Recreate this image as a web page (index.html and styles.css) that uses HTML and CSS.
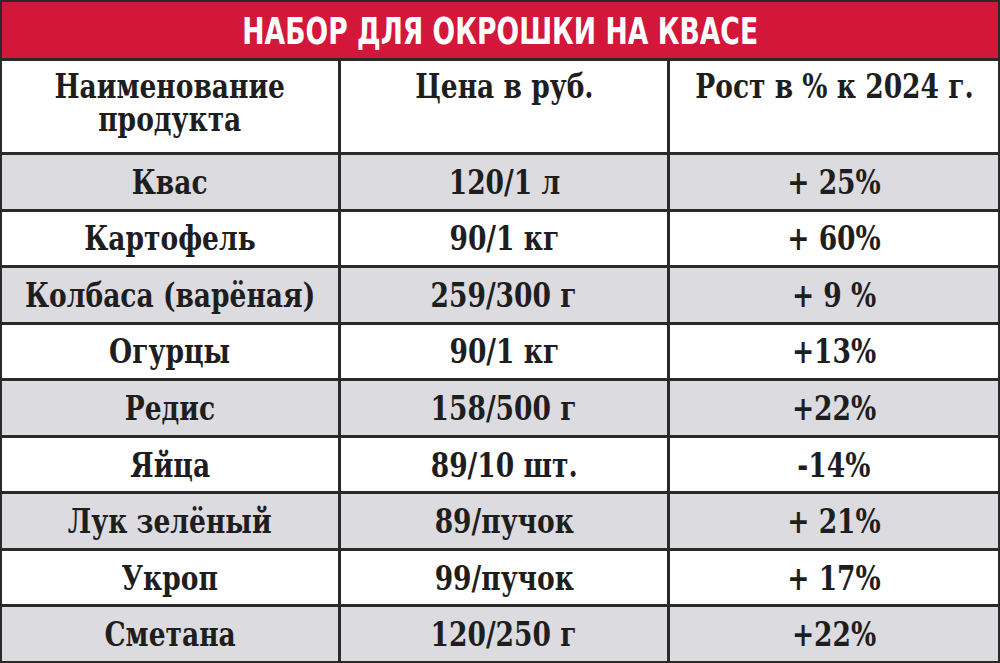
FILE: index.html
```html
<!DOCTYPE html>
<html lang="ru">
<head>
<meta charset="utf-8">
<title>Набор для окрошки на квасе</title>
<link rel="stylesheet" href="styles.css">
</head>
<body>
<div class="sheet">
  <div class="title"><span class="ttl">НАБОР ДЛЯ ОКРОШКИ НА КВАСЕ</span></div>

  <div class="cell head"><span class="txt">Наименование<br>продукта</span></div>
  <div class="cell head"><span class="txt">Цена в руб.</span></div>
  <div class="cell head"><span class="txt">Рост в % к 2024 г.</span></div>

  <div class="cell gray"><span class="txt">Квас</span></div>
  <div class="cell gray"><span class="txt">120/1 л</span></div>
  <div class="cell gray"><span class="txt">+ 25%</span></div>

  <div class="cell"><span class="txt">Картофель</span></div>
  <div class="cell"><span class="txt">90/1 кг</span></div>
  <div class="cell"><span class="txt">+ 60%</span></div>

  <div class="cell gray"><span class="txt">Колбаса (варёная)</span></div>
  <div class="cell gray"><span class="txt">259/300 г</span></div>
  <div class="cell gray"><span class="txt">+ 9 %</span></div>

  <div class="cell"><span class="txt">Огурцы</span></div>
  <div class="cell"><span class="txt">90/1 кг</span></div>
  <div class="cell"><span class="txt">+13%</span></div>

  <div class="cell gray"><span class="txt">Редис</span></div>
  <div class="cell gray"><span class="txt">158/500 г</span></div>
  <div class="cell gray"><span class="txt">+22%</span></div>

  <div class="cell"><span class="txt">Яйца</span></div>
  <div class="cell"><span class="txt">89/10 шт.</span></div>
  <div class="cell"><span class="txt">-14%</span></div>

  <div class="cell gray"><span class="txt">Лук зелёный</span></div>
  <div class="cell gray"><span class="txt">89/пучок</span></div>
  <div class="cell gray"><span class="txt">+ 21%</span></div>

  <div class="cell"><span class="txt">Укроп</span></div>
  <div class="cell"><span class="txt">99/пучок</span></div>
  <div class="cell"><span class="txt">+ 17%</span></div>

  <div class="cell gray"><span class="txt">Сметана</span></div>
  <div class="cell gray"><span class="txt">120/250 г</span></div>
  <div class="cell gray"><span class="txt">+22%</span></div>
</div>
</body>
</html>
```

FILE: styles.css
```css
html, body {
  margin: 0;
  padding: 0;
  background: #ffffff;
}

.sheet {
  width: 1000px;
  height: 663px;
  box-sizing: border-box;
  padding: 2px;
  background: #2a2a2a;
  display: grid;
  grid-template-columns: 336px 326px 328px;
  grid-template-rows: 56px 91px repeat(9, 1fr);
  gap: 3px;
}

.title {
  grid-column: 1 / 4;
  background: #d3173a;
  color: #ffffff;
  font-family: "DejaVu Sans", sans-serif;
  font-weight: bold;
  font-size: 37px;
  display: flex;
  align-items: center;
  justify-content: center;
  padding-top: 3px;
  box-sizing: border-box;
  white-space: nowrap;
  overflow: hidden;
}

.ttl {
  display: inline-block;
  transform: scaleX(0.72);
}

.cell {
  background: #ffffff;
  color: #1f1e1f;
  font-family: "DejaVu Serif", serif;
  font-weight: bold;
  font-size: 34px;
  display: flex;
  align-items: center;
  justify-content: center;
  text-align: center;
  white-space: nowrap;
  overflow: visible;
}

.txt {
  display: inline-block;
  flex: none;
  transform: scaleX(0.78);
}

.cell.gray {
  background: #dcdbdf;
}

.cell.head {
  align-items: flex-start;
  padding-top: 9px;
  line-height: 33px;
}
```
